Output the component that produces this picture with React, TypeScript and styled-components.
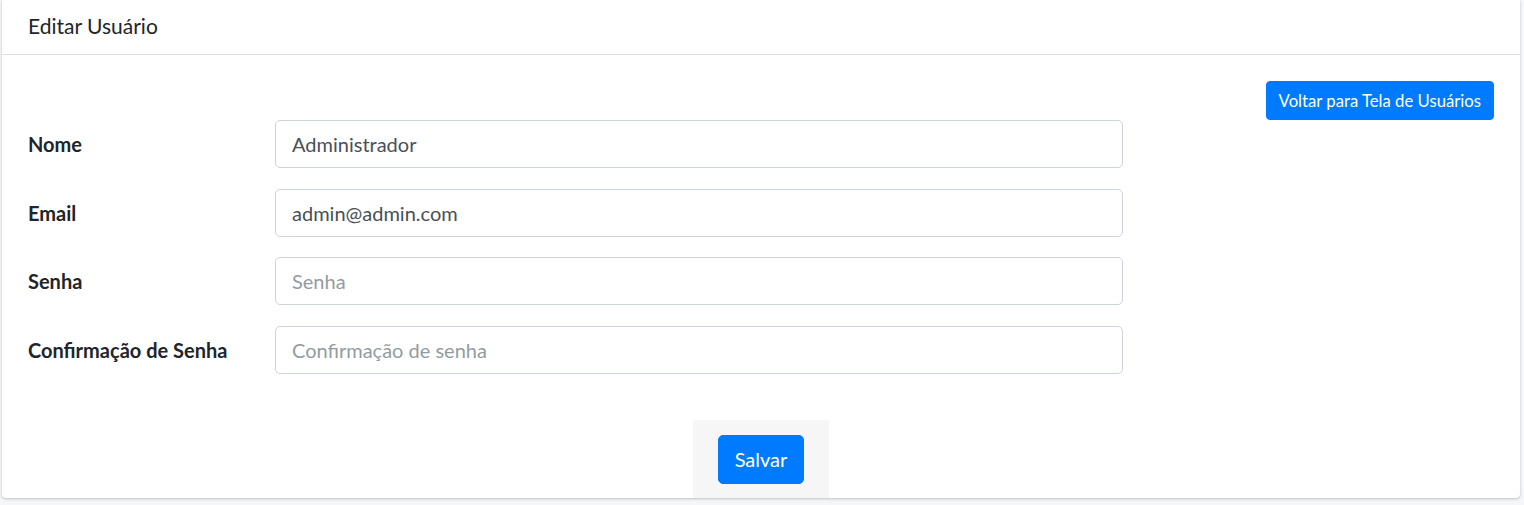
import React from 'react'
import styled, { createGlobalStyle } from 'styled-components'

const GlobalStyle = createGlobalStyle`
  html, body {
    margin: 0;
    padding: 0;
    background: #f4f6f9;
    font-family: Lato, "Noto Sans", sans-serif;
    color: #212529;
  }
`

const Page = styled.div`
  padding: 0 4px 7px 2px;
`

const Card = styled.div`
  background: #fff;
  border-radius: 0 0 4px 4px;
  box-shadow: 0 0 1px rgba(0, 0, 0, .125), 0 1px 3px rgba(0, 0, 0, .2);
`

const CardHeader = styled.div`
  box-sizing: border-box;
  height: 55px;
  display: flex;
  align-items: center;
  padding: 0 26px 3px;
  border-bottom: 1px solid #dee2e6;
`

const Title = styled.h3`
  margin: 0;
  font-size: 21px;
  font-weight: 400;
`

const CardBody = styled.div`
  padding: 26px 26px 0;
`

const Toolbar = styled.div`
  display: flex;
  justify-content: flex-end;
`

const Button = styled.button<{ $large?: boolean }>`
  background: #007bff;
  border: 1px solid #007bff;
  color: #fff;
  font-family: inherit;
  font-size: ${p => (p.$large ? '20px' : '16.7px')};
  height: ${p => (p.$large ? '49px' : '39px')};
  padding: ${p => (p.$large ? '0 16px' : '0 12px')};
  border-radius: ${p => (p.$large ? '5px' : '4px')};
  cursor: pointer;
`

const Form = styled.form`
  display: flex;
  flex-direction: column;
  gap: 20.5px;
  width: 1095px;
`

const Row = styled.div`
  display: grid;
  grid-template-columns: 247px 1fr;
  align-items: center;
`

const Label = styled.label`
  font-weight: 700;
  font-size: 20px;
`

const Input = styled.input`
  box-sizing: border-box;
  height: 48px;
  width: 100%;
  padding: 0 16px;
  font-family: inherit;
  font-size: 20px;
  color: #495057;
  border: 1px solid #ced4da;
  border-radius: 5px;
  background: #fff;
  outline: none;
  &::placeholder {
    color: #939ba2;
  }
`

const Footer = styled.div`
  display: flex;
  justify-content: center;
  margin-top: 46px;
`

const FooterBox = styled.div`
  background: #f6f6f6;
  padding: 15px 25px 14px;
`

const fields = [
  { label: 'Nome', value: 'Administrador', placeholder: 'Nome', type: 'text' },
  { label: 'Email', value: 'admin@admin.com', placeholder: 'Email', type: 'email' },
  { label: 'Senha', value: '', placeholder: 'Senha', type: 'password' },
  { label: 'Confirmação de Senha', value: '', placeholder: 'Confirmação de senha', type: 'password' },
]

export default function App() {
  return (
    <Page>
      <GlobalStyle />
      <Card>
        <CardHeader>
          <Title>Editar Usuário</Title>
        </CardHeader>
        <CardBody>
          <Toolbar>
            <Button type="button">Voltar para Tela de Usuários</Button>
          </Toolbar>
          <Form>
            {fields.map(f => (
              <Row key={f.label}>
                <Label>{f.label}</Label>
                <Input type={f.type} defaultValue={f.value} placeholder={f.placeholder} />
              </Row>
            ))}
          </Form>
        </CardBody>
        <Footer>
          <FooterBox>
            <Button $large type="button">Salvar</Button>
          </FooterBox>
        </Footer>
      </Card>
    </Page>
  )
}
